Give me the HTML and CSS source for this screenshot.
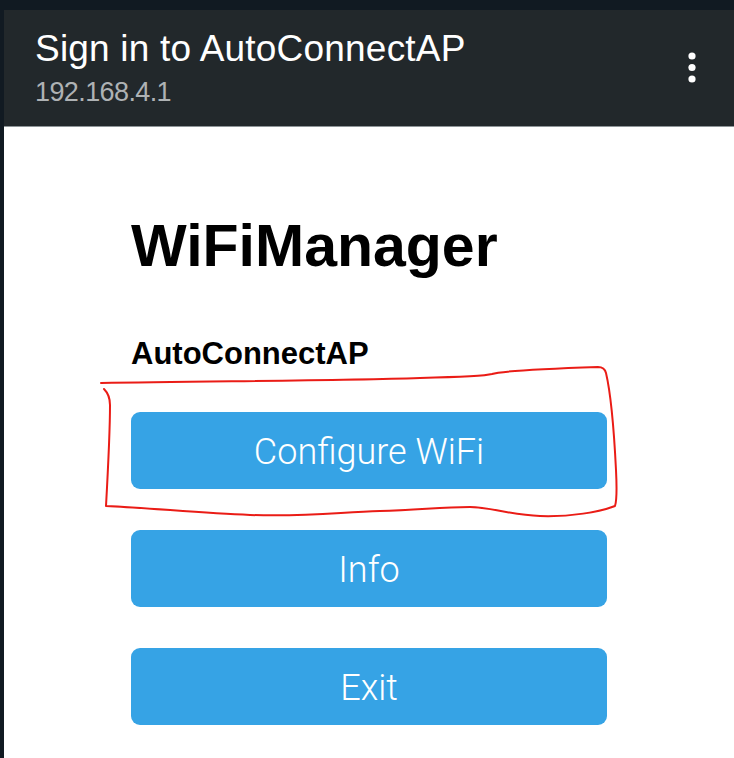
FILE: index.html
```html
<!DOCTYPE html>
<html>
<head>
<meta charset="utf-8">
<link rel="stylesheet" href="styles.css">
</head>
<body>
<div class="frame">
  <header class="topbar">
    <div class="titles">
      <div class="title">Sign in to AutoConnectAP</div>
      <div class="subtitle">192.168.4.1</div>
    </div>
    <svg class="kebab" width="10" height="36" viewBox="0 0 10 36">
      <circle cx="5" cy="8" r="3.6" fill="#ffffff"/>
      <circle cx="5" cy="19.5" r="3.6" fill="#ffffff"/>
      <circle cx="5" cy="31" r="3.6" fill="#ffffff"/>
    </svg>
  </header>
  <main class="content">
    <div class="inner">
      <h1 class="brand">WiFiManager</h1>
      <h2 class="ssid">AutoConnectAP</h2>
      <div class="buttons">
        <button class="btn">Configure WiFi</button>
        <button class="btn">Info</button>
        <button class="btn">Exit</button>
      </div>
    </div>
  </main>
</div>
<svg class="annotation" width="734" height="758" viewBox="0 0 734 758">
  <path d="M101 383 C 200 381, 330 381, 420 378 C 460 377, 485 376, 492 374 C 500 371, 540 369, 598 367 C 603 367, 605 369, 606 373 C 610 390, 614 430, 616 470 C 617 490, 617 500, 615 506 C 600 512, 570 517, 540 516 C 510 515, 490 507, 470 507 C 440 507, 420 510, 380 511 C 340 512, 310 517, 250 515 C 200 513, 150 508, 106 506 C 108 470, 110 430, 110 405 C 110 396, 106 391, 104 389" fill="none" stroke="#ea1c16" stroke-width="2" stroke-linejoin="round" stroke-linecap="round"/>
</svg>
</body>
</html>
```
FILE: styles.css
```css
html, body {
  margin: 0;
  padding: 0;
  background: #111a22;
  font-family: "Liberation Sans", Arial, sans-serif;
}

.frame {
  height: 758px;
  box-sizing: border-box;
  padding: 10px 0 0 4px;
  display: flex;
  flex-direction: column;
  overflow: hidden;
}

.topbar {
  height: 117px;
  box-sizing: border-box;
  background: #22282b;
  border-bottom: 1px solid #8e9598;
  display: flex;
  align-items: flex-start;
  padding: 19px 37px 0 31px;
}

.titles {
  display: flex;
  flex-direction: column;
}

.title {
  color: #ffffff;
  font-size: 37px;
  line-height: 40px;
  letter-spacing: 0.2px;
}

.subtitle {
  color: #aeb2b4;
  font-size: 27px;
  line-height: 30px;
  margin-top: 8px;
  letter-spacing: -0.6px;
}

.kebab {
  margin-left: auto;
  margin-top: 19px;
}

.content {
  flex: 1;
  background: #ffffff;
}

.inner {
  width: 476px;
  margin: 0 auto;
  padding-top: 90px;
}

.brand {
  margin: 0;
  font-size: 59px;
  line-height: 59px;
  font-weight: 700;
  color: #000000;
}

.ssid {
  margin: 62px 0 0 0;
  font-size: 31px;
  line-height: 31px;
  font-weight: 700;
  color: #000000;
}

.buttons {
  display: flex;
  flex-direction: column;
  gap: 41px;
  margin-top: 43px;
}

.btn {
  height: 77px;
  box-sizing: border-box;
  padding: 3px 0 0 0;
  border: 0;
  border-radius: 9px;
  background: #36a3e5;
  color: #ffffff;
  font-family: Roboto, "Liberation Sans", sans-serif;
  font-size: 36px;
  font-weight: 300;
  display: flex;
  align-items: center;
  justify-content: center;
}

.annotation {
  position: absolute;
  left: 0;
  top: 0;
  pointer-events: none;
}
```
